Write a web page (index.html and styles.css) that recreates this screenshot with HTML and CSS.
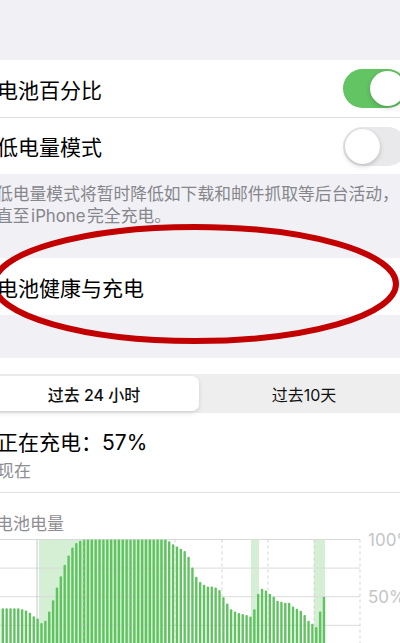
FILE: index.html
```html
<!DOCTYPE html>
<html lang="zh-CN">
<head>
    <meta charset="UTF-8">
    <meta name="viewport" content="width=device-width, initial-scale=1.0">
    <title>电池</title>
    <link rel="stylesheet" href="styles.css">
</head>
<body>
    <div class="screen">
        <div class="group">
            <div class="row">
                <span>电池百分比</span>
                <span class="switch on"><span class="knob"></span></span>
            </div>
            <div class="row">
                <span>低电量模式</span>
                <span class="switch"><span class="knob"></span></span>
            </div>
        </div>
        <p class="footnote">低电量模式将暂时降低如下载和邮件抓取等后台活动，<br>直至&#8202;iPhone&#8202;完全充电。</p>

        <div class="group health">
            <div class="row"><span>电池健康与充电</span></div>
        </div>

        <div class="card">
            <div class="segmented">
                <div class="segment active">过去 24 小时</div>
                <div class="segment">过去10天</div>
            </div>
            <div class="status">
                <div class="status-title">正在充电：57%</div>
                <div class="status-time">现在</div>
            </div>
            <div class="chart-title">电池电量</div>
            <div class="chart">
                <svg id="chart" width="420" height="110" viewBox="-20 534 420 110"></svg>
            </div>
        </div>
    </div>

    <svg class="mark" width="400" height="643" viewBox="0 0 400 643">
        <ellipse cx="195" cy="284" rx="201" ry="57" fill="none" stroke="#c20000" stroke-width="6"/>
    </svg>

    <script>
    // battery level, one bar per 15 minutes
    const levels = [
        40, 40, 40, 40, 40, 40, 40, 40, 39, 38, 36, 33, 31, 27, 29, 37,
        47, 58, 68, 78, 86, 93, 97, 99, 100, 100, 100, 100, 100, 100, 100, 100,
        100, 100, 100, 100, 100, 100, 100, 100, 100, 100, 100, 100, 100, 100, 98.5, 96,
        94, 92, 90, 85, 75.5, 67.5, 63, 60.5, 59, 59, 58, 56, 49.5, 44,
        39, 37, 35.7, 35, 34, 32.7, 39, 52.6, 57, 55.5, 52.6, 50, 46.5, 45.6,
        44.7, 44.7, 41.5, 39.5, 37.7, 34, 29, 26.3, 23.5, 37, 50
    ];
    const charging = [[39, 167], [251, 259], [314, 325]];

    function buildChart() {
        const svg = document.getElementById("chart");
        const top = 539.5, step = 28.6, right = 360;
        const zero = top + step * 4;
        let out = "";

        charging.forEach(([a, b]) => {
            out += `<rect x="${a}" y="${top}" width="${b - a}" height="120" fill="#d4efd4"/>`;
        });
        for (let i = 0; i < 4; i++) {
            const y = top + step * i;
            out += `<line x1="-20" x2="${right}" y1="${y}" y2="${y}" stroke="#dadada" stroke-width="1"/>`;
        }
        out += `<line x1="37" x2="37" y1="${top}" y2="660" stroke="#c8c8c8" stroke-width="1"/>`;

        levels.forEach((v, i) => {
            const cx = 324 - 3.87 * (levels.length - 1 - i);
            const y = zero - v * 1.143;
            out += `<rect x="${(cx - 1.2).toFixed(2)}" y="${y.toFixed(1)}" width="2.4" height="${(670 - y).toFixed(1)}" rx="1" fill="#5fc35f"/>`;
        });

        [83, 129, 175, 222, 268, 314, 360].forEach(x => {
            out += `<line x1="${x}" x2="${x}" y1="${top}" y2="660" stroke="#cfcfcf" stroke-width="1" stroke-dasharray="3 3" opacity="0.85"/>`;
        });

        out += `<text x="368" y="540" class="axis">100%</text>`;
        out += `<text x="368" y="597" class="axis">50%</text>`;
        svg.innerHTML = out;
    }

    buildChart();
    </script>
</body>
</html>
```

FILE: styles.css
```css
* {
    box-sizing: border-box;
}

body {
    margin: 0;
    height: 643px;
    overflow: hidden;
    position: relative;
    background-color: #f0f0f5;
    font-family: "Inter", "Noto Sans CJK SC", sans-serif;
    color: #000;
}

.screen {
    width: 442px;
    margin-left: -19px;
    padding-top: 60px;
}

.group {
    background: #fff;
}

.row {
    display: flex;
    align-items: center;
    justify-content: space-between;
    height: 57px;
    padding: 0 16px;
    font-size: 21px;
}

.row + .row {
    border-top: 1px solid #dcdce0;
}

.switch {
    display: flex;
    align-items: center;
    width: 64px;
    height: 39px;
    padding: 2px;
    border-radius: 20px;
    background: #e9e9eb;
}

.switch.on {
    justify-content: flex-end;
    background: #62c462;
}

.knob {
    width: 35px;
    height: 35px;
    border-radius: 50%;
    background: #fff;
    box-shadow: 0 2px 5px rgba(0, 0, 0, 0.18), 0 0 1px rgba(0, 0, 0, 0.12);
}

.footnote {
    margin: 0;
    padding: 9px 8px 31px 15px;
    font-size: 16.8px;
    line-height: 22px;
    white-space: nowrap;
    color: #86868b;
}

.health {
    margin-bottom: 43px;
}

.card {
    background: #fff;
    padding-top: 16px;
}

.segmented {
    display: flex;
    height: 39px;
    margin: 0 12px 0 6px;
    padding: 2px;
    border-radius: 9px;
    background: #eeeeef;
}

.segment {
    flex: 1;
    display: flex;
    align-items: center;
    justify-content: center;
    border-radius: 7px;
    font-size: 16px;
    font-weight: 400;
    color: #111;
}

.segment.active {
    background: #fff;
    font-weight: 500;
    box-shadow: 0 2px 5px rgba(0, 0, 0, 0.12);
}

.status {
    padding: 16px 16px 11px;
    border-bottom: 1px solid #e0e0e4;
}

.status-title {
    font-size: 21px;
    line-height: 28px;
}

.status-time {
    margin-top: 4px;
    font-size: 17px;
    line-height: 20px;
    color: #8e8e93;
}

.chart-title {
    margin-top: 21px;
    padding-left: 15px;
    font-size: 17px;
    line-height: 20px;
    color: #8e8e93;
}

.chart {
    margin-left: -1px;
}

.chart svg {
    display: block;
    overflow: visible;
}

.axis {
    font-size: 17px;
    fill: #c4c4c8;
    dominant-baseline: central;
}

.mark {
    position: absolute;
    left: 0;
    top: 0;
    pointer-events: none;
}
```
